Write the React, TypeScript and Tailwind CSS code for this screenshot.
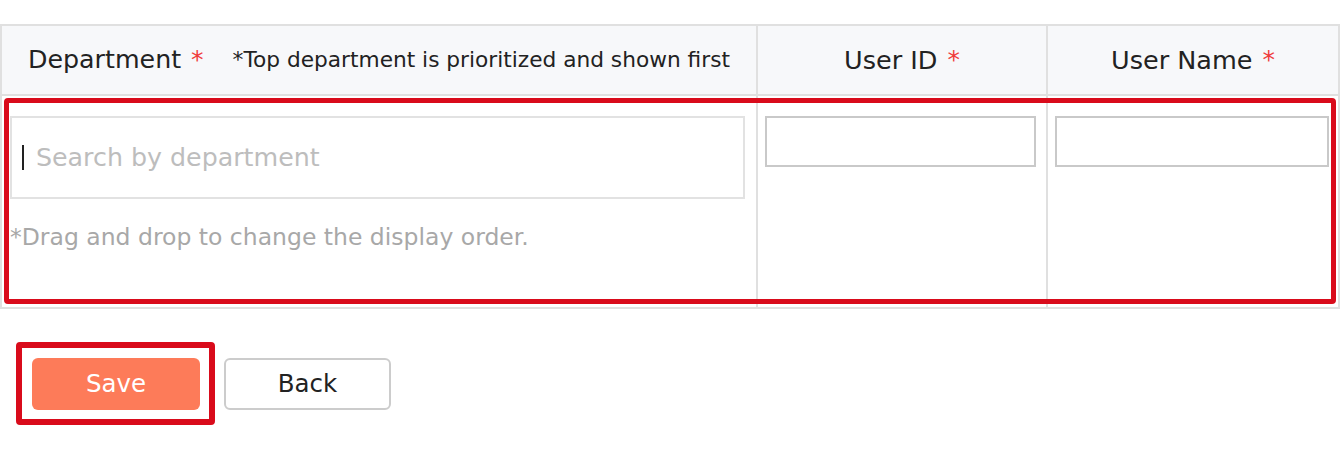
import React from "react";

export default function App() {
  return (
    <div
      className="relative w-[1340px] h-[456px] bg-white pt-[24px] text-[#222]"
      style={{ fontFamily: '"DejaVu Sans", Verdana, sans-serif' }}
    >
      {/* Table */}
      <div className="relative w-[1340px] border-2 border-[#e0e0e0]">
        <div className="grid grid-cols-[756px_290px_1fr] h-[70px] bg-[#f7f8fa] border-b-2 border-[#e0e0e0]">
          <div className="flex items-center pl-[26px] border-r-2 border-[#e0e0e0]">
            <span className="text-[25.3px]">Department</span>
            <span className="text-[25px] text-[#f03c3c] ml-[10px]">*</span>
            <span className="text-[21.7px] ml-[29px]">
              *Top department is prioritized and shown first
            </span>
          </div>
          <div className="flex items-center justify-center border-r-2 border-[#e0e0e0]">
            <span className="text-[25.5px]">User ID</span>
            <span className="text-[25px] text-[#f03c3c] ml-[10px]">*</span>
          </div>
          <div className="flex items-center justify-center">
            <span className="text-[25.5px]">User Name</span>
            <span className="text-[25px] text-[#f03c3c] ml-[10px]">*</span>
          </div>
        </div>
        <div className="grid grid-cols-[756px_290px_1fr] h-[211px]">
          <div className="pl-[8px] pr-[11px] pt-[20px] border-r-2 border-[#e0e0e0]">
            <div className="flex items-center h-[83px] border-2 border-[#e2e2e2] pl-[10px]">
              <span className="w-[2px] h-[25px] bg-[#222] mr-[12px]" />
              <span className="text-[25.3px] text-[#bdbdbd]">Search by department</span>
            </div>
            <div className="mt-[21px] text-[23.5px] text-[#a8a8a8]">
              *Drag and drop to change the display order.
            </div>
          </div>
          <div className="pl-[7px] pr-[10px] pt-[20px] border-r-2 border-[#e0e0e0]">
            <div className="h-[51px] border-2 border-[#c9c9c9]" />
          </div>
          <div className="pl-[7px] pr-[9px] pt-[20px]">
            <div className="h-[51px] border-2 border-[#c9c9c9]" />
          </div>
        </div>
        {/* red annotation */}
        <div className="absolute left-[2px] top-[72px] w-[1332px] h-[206px] border-[5px] border-[#d90b1b] rounded-[4px] pointer-events-none" />
      </div>

      {/* Buttons */}
      <div className="flex items-center gap-[24px] pl-[32px] mt-[49px]">
        <div className="relative">
          <button className="w-[168px] h-[52px] rounded-[6px] bg-[#fd7b59] text-white text-[24.5px]">
            Save
          </button>
          <div className="absolute -left-[16px] -top-[16px] w-[199px] h-[83px] border-[6px] border-[#d90b1b] rounded-[4px] pointer-events-none" />
        </div>
        <button className="w-[167px] h-[52px] rounded-[6px] bg-white border-2 border-[#cccccc] text-[#222] text-[24.5px]">
          Back
        </button>
      </div>
    </div>
  );
}
